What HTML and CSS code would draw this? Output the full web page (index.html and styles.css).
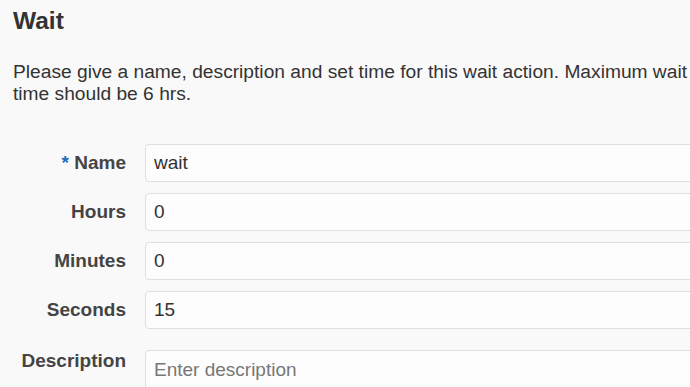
FILE: index.html
```html
<!DOCTYPE html>
<html>
<head>
<meta charset="utf-8">
<link rel="stylesheet" href="styles.css">
</head>
<body>
<div class="page">
  <h1 class="title">Wait</h1>
  <p class="intro">Please give a name, description and set time for this wait action. Maximum wait time should be 6 hrs.</p>
  <form class="form">
    <div class="row">
      <label class="label"><span class="req">*</span> Name</label>
      <input class="field" type="text" value="wait">
    </div>
    <div class="row">
      <label class="label">Hours</label>
      <input class="field" type="text" value="0">
    </div>
    <div class="row">
      <label class="label">Minutes</label>
      <input class="field" type="text" value="0">
    </div>
    <div class="row">
      <label class="label">Seconds</label>
      <input class="field" type="text" value="15">
    </div>
    <div class="row row-top">
      <label class="label">Description</label>
      <textarea class="field area" placeholder="Enter description"></textarea>
    </div>
  </form>
</div>
</body>
</html>
```
FILE: styles.css
```css
html, body {
  margin: 0;
  padding: 0;
  background: #f9f9f9;
  overflow: hidden;
}
.page {
  padding: 7px 0 0 13px;
  font-family: "Liberation Sans", Arial, sans-serif;
  color: #333;
}
.title {
  margin: 0;
  font-size: 24.5px;
  line-height: 27px;
  font-weight: bold;
  color: #333;
}
.intro {
  margin: 27px 0 0 0;
  font-size: 19.2px;
  line-height: 22px;
  width: 676px;
}
.form {
  margin-top: 39px;
  display: flex;
  flex-direction: column;
  gap: 11px;
}
.row {
  display: grid;
  grid-template-columns: 113px 700px;
  column-gap: 19px;
  align-items: center;
}
.row-top {
  align-items: start;
  margin-top: 10px;
}
.label {
  text-align: right;
  font-weight: bold;
  font-size: 19px;
  line-height: 22px;
  color: #444;
}
.req {
  color: #1f6cb8;
}
.field {
  box-sizing: border-box;
  height: 38px;
  margin: 0;
  padding: 0 8px;
  border: 1px solid #dde0e2;
  border-radius: 4px;
  background: #fdfdfd;
  font-family: "Liberation Sans", Arial, sans-serif;
  font-size: 19px;
  color: #333;
  outline: none;
}
.area {
  height: 80px;
  padding: 7px 8px;
  line-height: 24px;
  resize: none;
}
.area::placeholder {
  color: #777;
}
```
